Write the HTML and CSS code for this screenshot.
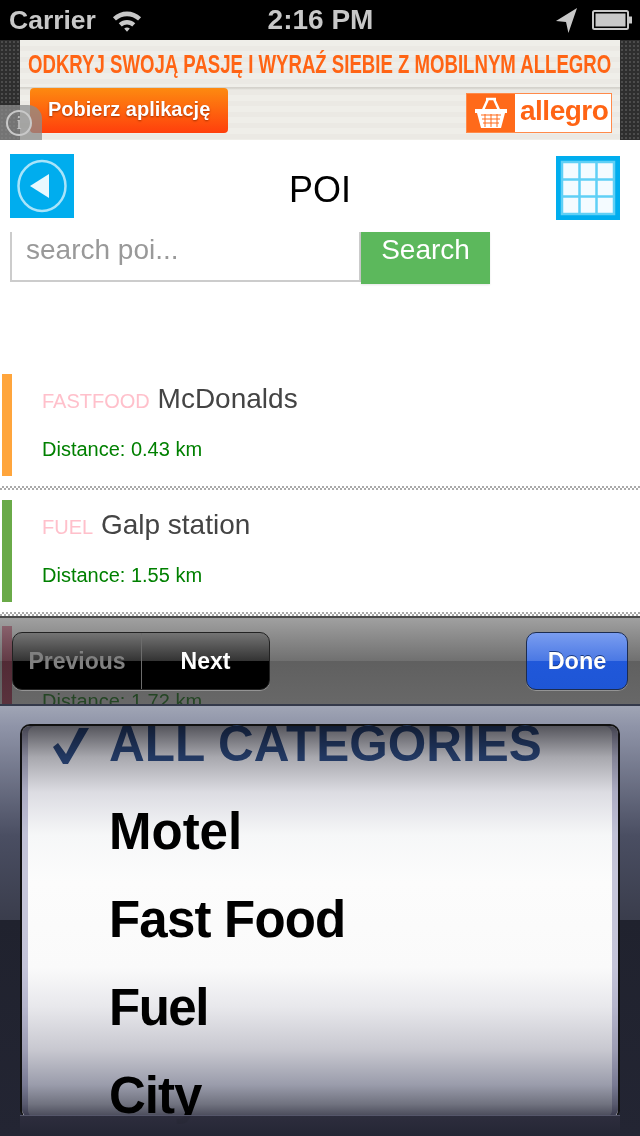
FILE: index.html
```html
<!DOCTYPE html>
<html lang="pl">
<head>
<meta charset="utf-8">
<title>POI</title>
<link rel="stylesheet" href="styles.css">
</head>
<body>
<div class="screen">
  <header class="status">
    <div class="status-left">
      <span>Carrier</span>
      <svg class="wifi" viewBox="0 0 32 24" width="30" height="23"><path d="M1 8.500C9.500 0.500 22.500 0.500 31 8.500L27.800 12C21 5.800 11 5.800 4.200 12Z M7.200 15C12.500 10.300 19.500 10.300 24.800 15L21.600 18.400C18.300 15.400 13.700 15.400 10.400 18.400Z M13 20.500C14.800 19 17.200 19 19 20.500L16 24Z" fill="#c8c8c8"/></svg>
    </div>
    <div class="status-time">2:16 PM</div>
    <div class="status-right">
      <svg class="arrow" viewBox="0 0 24 28" width="23" height="27"><path d="M23 1L1 14.500L11.500 15.500L14 27Z" fill="#c8c8c8"/></svg>
      <svg class="battery" viewBox="0 0 40 20" width="40" height="20"><rect x="1" y="1" width="35" height="18" rx="1.500" fill="none" stroke="#c8c8c8" stroke-width="2"/><rect x="3.500" y="3.500" width="30" height="13" fill="#c8c8c8"/><rect x="37" y="6.500" width="3" height="7" fill="#c8c8c8"/></svg>
    </div>
  </header>

  <aside class="ad">
    <div class="ad-side"></div>
    <div class="ad-body">
      <div class="ad-headline">ODKRYJ SWOJĄ PASJĘ I WYRAŹ SIEBIE Z MOBILNYM ALLEGRO</div>
      <div class="ad-row">
        <div class="ad-cta">Pobierz aplikację</div>
        <div class="ad-logo">
          <span class="ad-basket">
            <svg viewBox="0 0 36 36" width="36" height="36"><path d="M10 15L15 4M26 15L21 4M13 4H23" stroke="#fff" stroke-width="2.500" fill="none"/><path d="M2 14H34V18H32L28 33H8L4 18H2Z" fill="#fff"/><path d="M8 20H28M9 24H27M10 28H26M12 19V32M18 19V32M24 19V32" stroke="#ff6a1a" stroke-width="1"/></svg>
          </span>
          <span class="ad-word">allegro</span>
        </div>
      </div>
    </div>
    <div class="ad-side"></div>
    <div class="ad-info"><span class="ad-info-dot">i</span></div>
  </aside>

  <nav class="nav">
    <button class="square-btn back-btn" aria-label="Back">
      <svg viewBox="0 0 64 64" width="64" height="64"><ellipse cx="32" cy="32" rx="23.500" ry="25" fill="none" stroke="#a8e4fa" stroke-width="2.500"/><path d="M20 32L39 20V44Z" fill="#e8f8fe"/></svg>
    </button>
    <h1 class="nav-title">POI</h1>
    <button class="square-btn grid-btn" aria-label="Menu">
      <svg viewBox="0 0 64 64" width="64" height="64"><path d="M6 6H58V58H6Z" fill="#f4fbff"/><path d="M6 6H58V58H6Z M23.500 6V58M40.500 6V58M6 23.500H58M6 40.500H58" fill="none" stroke="#5fd0f6" stroke-width="2.500"/></svg>
    </button>
  </nav>

  <form class="search">
    <div class="search-input">search poi...</div>
    <div class="search-btn">Search</div>
  </form>

  <ul class="poi-list">
    <li class="poi">
      <span class="poi-bar bar-orange"></span>
      <div class="poi-text">
        <div class="poi-title"><span class="poi-cat">FASTFOOD</span> McDonalds</div>
        <div class="poi-dist">Distance: 0.43 km</div>
      </div>
    </li>
    <li class="poi">
      <span class="poi-bar bar-green"></span>
      <div class="poi-text">
        <div class="poi-title"><span class="poi-cat">FUEL</span> Galp station</div>
        <div class="poi-dist">Distance: 1.55 km</div>
      </div>
    </li>
    <li class="poi">
      <span class="poi-bar bar-red"></span>
      <div class="poi-text">
        <div class="poi-title"></div>
        <div class="poi-dist">Distance: 1.72 km</div>
      </div>
    </li>
  </ul>

  <section class="input-panel">
    <div class="toolbar">
      <div class="segmented">
        <span class="seg seg-off">Previous</span>
        <span class="seg seg-on">Next</span>
      </div>
      <div class="done-btn">Done</div>
    </div>
    <div class="picker">
      <div class="wheel">
        <div class="wheel-item wheel-selected">
          <svg class="check" viewBox="0 0 40 40" width="40" height="40"><path d="M2 21L7 17L15 28L28 2H38L17 38H12Z" fill="#33558f"/></svg>
          ALL CATEGORIES
        </div>
        <div class="wheel-item">Motel</div>
        <div class="wheel-item item-fast">Fast Food</div>
        <div class="wheel-item item-fuel">Fuel</div>
        <div class="wheel-item item-city">City</div>
      </div>
    </div>
  </section>
</div>
</body>
</html>
```

FILE: styles.css
```css
* { box-sizing: border-box; }
html, body { margin: 0; padding: 0; }
body { background: #fff; font-family: "Liberation Sans", Arial, sans-serif; }
.screen { position: relative; width: 640px; height: 1136px; overflow: hidden; background: #fff; }

.status { height: 40px; background: #000; color: #c8c8c8; display: grid; grid-template-columns: 1fr auto 1fr; align-items: center; padding: 0 8px 0 9px; font-size: 28px; font-weight: 700; }
.status-left { display: flex; align-items: center; gap: 16px; font-size: 26.500px; }
.status-time { font-size: 28px; }
.status-right { display: flex; align-items: center; justify-content: flex-end; gap: 14px; }
.wifi, .arrow, .battery { display: block; }

.ad { position: relative; height: 100px; display: flex; background: #333; }
.ad-side { flex: none; width: 20px; background: radial-gradient(circle, #4c4c4c 1px, #2e2e2e 1.500px) 0 0 / 4px 4px; }
.ad-body { flex: 1; min-width: 0; background: linear-gradient(transparent 47px, #d2cfc9 47px, #dcdad4 49px, transparent 50px), repeating-linear-gradient(180deg, #efeee9 0 6px, #ebe9e4 6px 11px); padding: 8px 8px 0; display: flex; flex-direction: column; }
.ad-headline { width: 583px; height: 32px; line-height: 32px; font-weight: 700; font-size: 25px; color: #ff6414; white-space: nowrap; transform: scaleX(.744); transform-origin: left center; }
.ad-row { display: flex; justify-content: space-between; align-items: flex-start; margin-top: 8px; padding-left: 2px; }
.ad-cta { width: 198px; height: 45px; line-height: 42px; border-radius: 4px; background: linear-gradient(#fd8a10, #ff3f0c); color: #fff; font-size: 20px; font-weight: 700; padding-left: 18px; text-shadow: 0 1px 2px #a03000; white-space: nowrap; }
.ad-logo { display: flex; height: 40px; margin-top: 5px; width: 146px; background: #ff6a1a; border: 1px solid #ff8a4a; }
.ad-basket { width: 48px; display: flex; align-items: center; justify-content: center; }
.ad-word { flex: 1; background: #fff; color: #ff6414; font-size: 28px; font-weight: 700; letter-spacing: -.5px; line-height: 34px; padding-left: 5px; white-space: nowrap; overflow: hidden; }
.ad-info { position: absolute; left: 0; top: 65px; width: 42px; height: 35px; background: rgba(140, 140, 140, .75); border-radius: 0 14px 0 0; display: flex; align-items: center; justify-content: center; padding-right: 2px; }
.ad-info-dot { width: 26px; height: 26px; border: 2px solid #c9c9c9; border-radius: 50%; color: #c9c9c9; font: 18px/22px "Liberation Serif", serif; text-align: center; margin-right: 2px; }

.nav { display: flex; justify-content: space-between; align-items: flex-start; height: 92px; padding: 14px 10px 0; }
.square-btn { width: 64px; height: 64px; border: 0; padding: 0; background: #00adee; display: block; flex: none; }
.square-btn svg { display: block; }
.grid-btn { margin-top: 2px; margin-right: 10px; }
.nav-title { margin: 18px 0 0 10px; font-size: 36px; font-weight: 400; line-height: 36px; color: #000; }

.search { display: flex; align-items: flex-start; height: 142px; padding-left: 10px; }
.search-input { width: 351px; height: 50px; border: 2px solid #ccc; border-top: 0; color: #999; font-size: 28px; line-height: 32px; padding: 2px 0 0 14px; background: #fff; }
.search-btn { width: 129px; height: 52px; background: #5cb85c; color: #fff; font-size: 28px; line-height: 36px; text-align: center; box-shadow: 0 1px 2px rgba(0,0,0,.1); }

.poi-list { list-style: none; margin: 0; padding: 0; }
.poi { display: flex; height: 126px; padding: 0 0 0 2px; background-image: conic-gradient(#aaa 25%, #fff 25% 50%, #aaa 50% 75%, #fff 75%); background-size: 4px 4px; background-position: 0 112px; background-repeat: repeat-x; }
.poi-bar { width: 10px; height: 102px; flex: none; }
.bar-orange { background: #ffa53c; }
.bar-green { background: #6aaa48; }
.bar-red { background: #c8305a; }
.poi-text { padding-left: 30px; }
.poi-title { height: 34px; margin-top: 8px; font-size: 28px; line-height: 34px; color: #444; white-space: nowrap; }
.poi-cat { font-size: 20px; color: #ffc0cb; }
.poi-dist { margin-top: 21px; font-size: 20px; line-height: 24px; color: #008000; }

.input-panel { position: absolute; left: 0; right: 0; bottom: 0; height: 520px; }
.toolbar { height: 90px; display: flex; justify-content: space-between; align-items: flex-start; padding: 14px 12px 0; border-top: 2px solid #4a4a4a; border-bottom: 2px solid #34394a; background: linear-gradient(rgba(127,127,127,.74), rgba(62,62,62,.74) 50%, rgba(40,40,40,.74) 50%, rgba(51,51,51,.74)); }
.segmented { display: flex; width: 258px; height: 58px; border: 1px solid #222; border-radius: 10px; overflow: hidden; background: linear-gradient(#747474, #333 50%, #000 50%, #000); box-shadow: 0 1px 0 rgba(255,255,255,.3); font-size: 23px; font-weight: 700; line-height: 56px; text-align: center; }
.seg { display: block; }
.seg-off { width: 129px; color: #808080; border-right: 1px solid #6c6c6c; }
.seg-on { flex: 1; color: #fff; }
.done-btn { width: 102px; height: 58px; border: 1px solid #1c2c50; border-radius: 10px; background: linear-gradient(#7a9df0, #4a78e4 50%, #2058da 50%, #1e56d6); box-shadow: 0 1px 0 rgba(255,255,255,.3); color: #fff; font-size: 23.500px; font-weight: 700; line-height: 56px; text-align: center; text-shadow: 0 -1px 0 #1a3a80; }

.picker { position: relative; height: 430px; padding: 18px 20px 0; background: linear-gradient(#a0a5b5 0, #8f94a8 20px, #4a4e62 130px, #3a3d4c 214px, #20222e 214px, #232533 100%); }
.picker::after { content: ""; position: absolute; left: 20px; right: 20px; bottom: 0; height: 20px; background: linear-gradient(rgba(46, 46, 62, .92), rgba(36, 38, 52, .96)); border-top: 1px solid #55566a; }
.wheel { position: relative; height: 392px; border: 2px solid #111; border-bottom: 0; border-radius: 10px 10px 6px 6px; padding: 0 0 0 87px; background: #fff; box-shadow: inset 6px 0 0 #c8c8dc, inset -6px 0 0 #c8c8dc; }
.wheel::after { content: ""; position: absolute; inset: 0; border-radius: 8px 8px 6px 6px; mix-blend-mode: multiply; background: linear-gradient(#55555c, #a8a8ae 8%, #dcdce2 17%, #f6f7f8 28%, #fcfcfc 40%, #fafafa 62%, #e8e8ec 72%, #c8c8d0 83%, #9a9cab 92%, #70727f 97%, #4a4b5a); }
.wheel-item { height: 88px; line-height: 88px; font-size: 51px; font-weight: 700; color: #000; white-space: nowrap; position: relative; top: -26px; }
.wheel-selected { color: #33558f; font-size: 49.500px; }
.item-fast { letter-spacing: -.8px; }
.item-fuel { letter-spacing: -1.500px; }
.item-city { letter-spacing: -1px; }
.check { position: absolute; left: -58px; top: 26px; display: block; }
```
